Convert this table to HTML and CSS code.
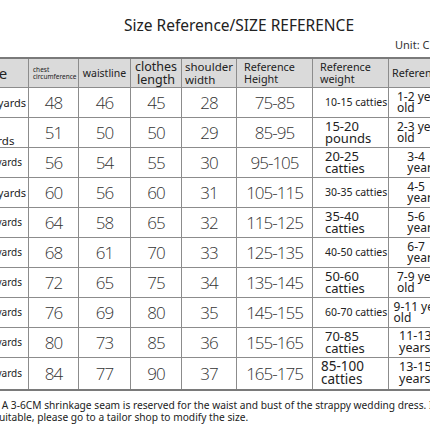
FILE: index.html
```html
<!DOCTYPE html>
<html>
<head>
<meta charset="utf-8">
<link rel="stylesheet" href="styles.css">
</head>
<body>
<div class="page">
  <h1 class="title">Size Reference/SIZE REFERENCE</h1>
  <div class="unit">Unit: CM</div>
  <table class="chart">
    <colgroup>
      <col class="c-size"><col class="c-chest"><col class="c-waist"><col class="c-len"><col class="c-sh"><col class="c-h"><col class="c-w"><col class="c-age">
    </colgroup>
    <thead>
      <tr>
        <th class="h-size">Size</th>
        <th class="h-chest">chest<br>circumference</th>
        <th class="h-waist">waistline</th>
        <th class="h-len">clothes<br>length</th>
        <th class="h-sh">shoulder<br>width</th>
        <th class="h-ref">Reference<br>Height</th>
        <th class="h-ref">Reference<br>weight</th>
        <th class="h-age">Reference age</th>
      </tr>
    </thead>
    <tbody>
      <tr><td class="size big">80 yards</td><td class="num">48</td><td class="num">46</td><td class="num">45</td><td class="num">28</td><td class="num">75-85</td><td class="wt sm">10-15 catties</td><td class="age"><span>1-2 years<br>old</span></td></tr>
      <tr><td class="size two">90<br>yards</td><td class="num">51</td><td class="num">50</td><td class="num">50</td><td class="num">29</td><td class="num">85-95</td><td class="wt">15-20<br>pounds</td><td class="age"><span>2-3 years<br>old</span></td></tr>
      <tr><td class="size">100 yards</td><td class="num">56</td><td class="num">54</td><td class="num">55</td><td class="num">30</td><td class="num">95-105</td><td class="wt">20-25<br>catties</td><td class="age"><span>3-4<br>years</span></td></tr>
      <tr><td class="size big">110 yards</td><td class="num">60</td><td class="num">56</td><td class="num">60</td><td class="num">31</td><td class="num">105-115</td><td class="wt sm">30-35 catties</td><td class="age"><span>4-5<br>years</span></td></tr>
      <tr><td class="size">120 yards</td><td class="num">64</td><td class="num">58</td><td class="num">65</td><td class="num">32</td><td class="num">115-125</td><td class="wt">35-40<br>catties</td><td class="age"><span>5-6<br>years</span></td></tr>
      <tr><td class="size">130 yards</td><td class="num">68</td><td class="num">61</td><td class="num">70</td><td class="num">33</td><td class="num">125-135</td><td class="wt sm">40-50 catties</td><td class="age"><span>6-7<br>years</span></td></tr>
      <tr><td class="size">140 yards</td><td class="num">72</td><td class="num">65</td><td class="num">75</td><td class="num">34</td><td class="num">135-145</td><td class="wt">50-60<br>catties</td><td class="age"><span>7-9 years<br>old</span></td></tr>
      <tr><td class="size">150 yards</td><td class="num">76</td><td class="num">69</td><td class="num">80</td><td class="num">35</td><td class="num">145-155</td><td class="wt sm">60-70 catties</td><td class="age"><span>9-11 years<br>old</span></td></tr>
      <tr><td class="size">160 yards</td><td class="num">80</td><td class="num">73</td><td class="num">85</td><td class="num">36</td><td class="num">155-165</td><td class="wt">70-85<br>catties</td><td class="age big"><span>11-13<br>years</span></td></tr>
      <tr class="last"><td class="size">170 yards</td><td class="num">84</td><td class="num">77</td><td class="num">90</td><td class="num">37</td><td class="num">165-175</td><td class="wt lg">85-100<br>catties</td><td class="age big"><span>13-15<br>years</span></td></tr>
    </tbody>
  </table>
  <div class="note">
    <p class="note-line first">Note: A 3-6CM shrinkage seam is reserved for the waist and bust of the strappy wedding dress. If it is not</p>
    <p class="note-line second">suitable, please go to a tailor shop to modify the size.</p>
  </div>
</div>
</body>
</html>
```
FILE: styles.css
```css
html, body {
  margin: 0;
  padding: 0;
  background: #fff;
  overflow: hidden;
}
body {
  width: 430px;
  height: 430px;
  font-family: "Noto Sans", "DejaVu Sans", sans-serif;
  color: #222;
}
.page {
  display: flex;
  flex-direction: column;
}
.title {
  margin: 0;
  padding: 15px 0 0 48px;
  height: 21px;
  line-height: 21px;
  font-size: 15.5px;
  font-weight: 400;
  text-align: center;
  color: #222;
  white-space: nowrap;
}
.unit {
  height: 21px;
  padding-left: 395px;
  padding-top: 1px;
  line-height: 16px;
  font-size: 11px;
  color: #333;
  white-space: nowrap;
  box-sizing: border-box;
}
.chart {
  margin-left: -42px;
  border-collapse: collapse;
  table-layout: fixed;
  width: 498px;
}
.c-size { width: 70px; }
.c-chest { width: 50px; }
.c-waist { width: 52px; }
.c-len { width: 51px; }
.c-sh { width: 55px; }
.c-h { width: 76px; }
.c-w { width: 76px; }
.c-age { width: 68px; }

.chart th, .chart td {
  border: 1px solid #8c8c8c;
  padding: 0;
  overflow: hidden;
}
.chart thead tr {
  height: 29px;
  background: #dadada;
}
.chart thead th {
  border-top: 2px solid #7a7a7a;
  font-weight: 400;
  color: #222;
  vertical-align: middle;
}
.h-size { font-size: 15px; text-align: center; }
.h-chest {
  font-size: 6.5px;
  line-height: 7px;
  text-align: left;
  padding-left: 4px !important;
  color: #444;
}
.h-waist { font-size: 10.5px; text-align: center; }
.h-len { font-size: 12.5px; line-height: 13px; text-align: center; }
.h-sh { font-size: 11.5px; line-height: 13px; text-align: left; padding-left: 3px !important; }
.h-ref { font-size: 10.8px; line-height: 12px; text-align: left; padding-left: 7px !important; }
.h-age { font-size: 10.8px; text-align: left; padding-left: 3px !important; white-space: nowrap; }

.chart tbody tr { height: 30px; }
.chart tbody tr.last { height: 33px; }
.chart tbody tr.last td { border-bottom: 2px solid #7a7a7a; }

.size {
  font-size: 10px;
  text-align: right;
  padding-right: 6px !important;
  white-space: nowrap;
  color: #222;
}
.size.big { font-size: 11px; padding-right: 2px !important; }
.size.two {
  font-size: 11.5px;
  line-height: 13px;
  text-align: left;
  padding-right: 0 !important;
  padding-left: 26px !important;
  padding-top: 3px !important;
}
.num {
  font-family: "Open Sans", "Noto Sans", sans-serif;
  font-weight: 300;
  font-size: 17px;
  letter-spacing: -1px;
  text-align: center;
  color: #333;
}
.wt {
  font-size: 13px;
  line-height: 12px;
  text-align: left;
  padding-left: 12px !important;
  color: #222;
}
.wt.sm { font-size: 10.5px; padding-left: 12px !important; white-space: nowrap; }
.wt.lg { font-size: 13.5px; line-height: 13px; padding-left: 8px !important; }
.age {
  font-size: 12px;
  line-height: 11px;
  text-align: center;
  color: #222;
  white-space: nowrap;
}
.age span {
  display: inline-block;
  text-align: left;
}
.age.big {
  font-size: 12.5px;
  line-height: 12px;
  text-align: left;
  padding-left: 10px !important;
}

.note {
  padding-top: 8px;
}
.note-line {
  margin: 0;
  font-size: 10.2px;
  line-height: 12px;
  white-space: nowrap;
  color: #222;
}
.note-line.first { margin-left: -27px; }
.note-line.second { margin-left: -6px; }
```
